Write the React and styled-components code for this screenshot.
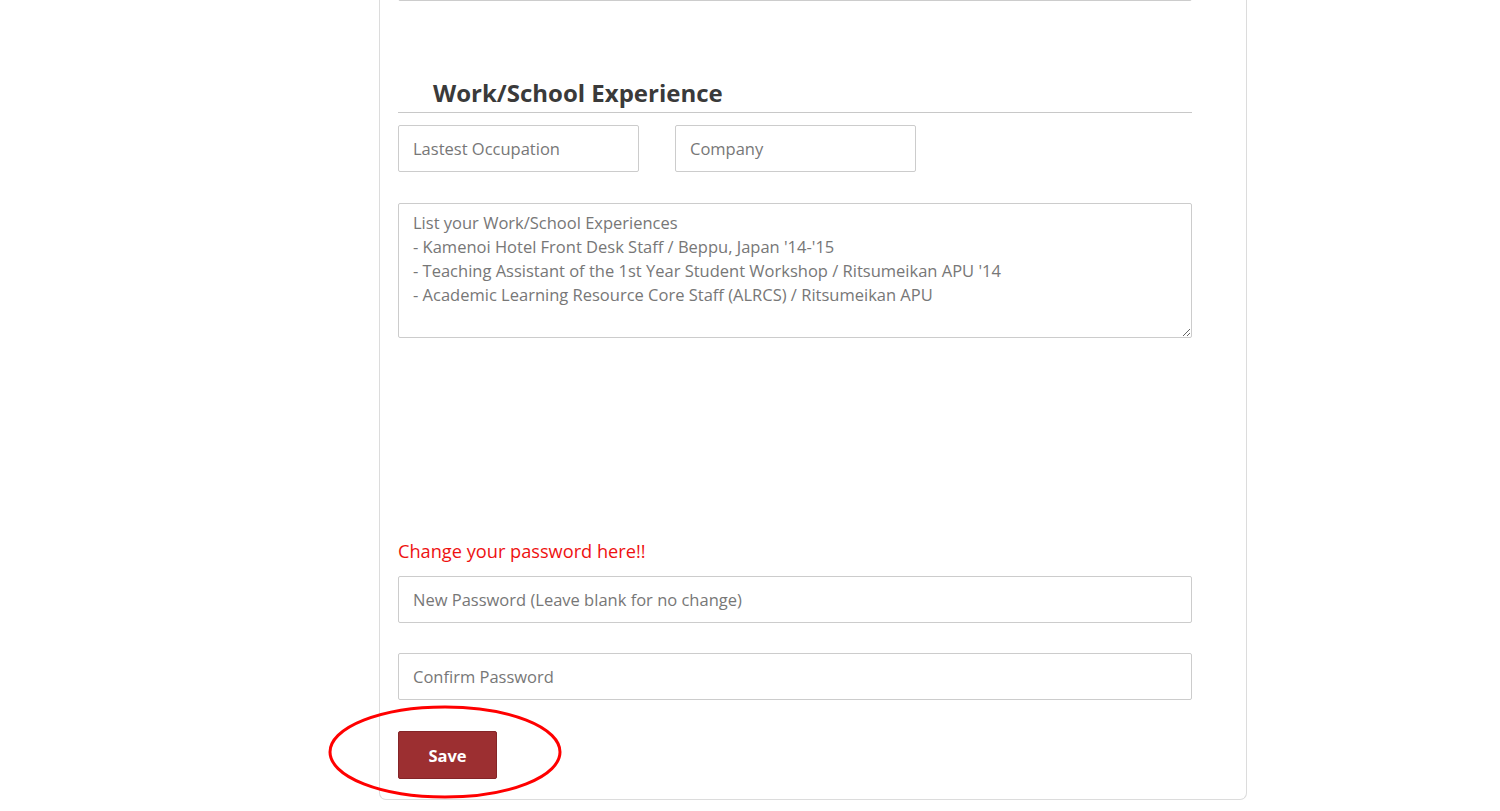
import React from "react";
import styled, { createGlobalStyle } from "styled-components";

const GlobalStyle = createGlobalStyle`
  html, body {
    margin: 0;
    padding: 0;
    background: #ffffff;
    overflow: hidden;
    font-family: "Open Sans", "Liberation Sans", sans-serif;
  }
`;

const Page = styled.div`
  width: 1500px;
  height: 811px;
  display: flex;
  justify-content: flex-start;
  padding-left: 379px;
  box-sizing: border-box;
`;

const Card = styled.div`
  position: relative;
  width: 868px;
  height: 846px;
  margin-top: -46px;
  box-sizing: border-box;
  border: 1px solid #dcdcdc;
  border-top: none;
  border-radius: 0 0 7px 7px;
  padding: 0 54px 0 18px;
  display: flex;
  flex-direction: column;
`;

const Input = styled.input`
  box-sizing: border-box;
  width: ${(p) => p.$width || "100%"};
  height: ${(p) => p.$height || "47px"};
  border: 1px solid #cccccc;
  border-radius: 2px;
  padding: 0 14px;
  font-family: "Open Sans", "Liberation Sans", sans-serif;
  font-size: 16.5px;
  color: #555;
  margin-top: ${(p) => p.$top || "0"};
  outline: none;

  &::placeholder {
    color: #777;
  }
`;

const Heading = styled.h3`
  margin: 76px 0 0;
  padding: 0 0 3px 35px;
  font-size: 24px;
  font-weight: 700;
  line-height: 32px;
  color: #3a3a3a;
  border-bottom: 1px solid #c8c8c8;
`;

const Row = styled.div`
  display: flex;
  gap: 36px;
  margin-top: 12px;
`;

const TextArea = styled.textarea`
  box-sizing: border-box;
  width: 100%;
  height: 135px;
  margin-top: 31px;
  border: 1px solid #cccccc;
  border-radius: 2px;
  padding: 7px 14px;
  font-family: "Open Sans", "Liberation Sans", sans-serif;
  font-size: 16.5px;
  line-height: 24px;
  color: #666;
  outline: none;
  resize: vertical;

  &::placeholder {
    color: #777;
  }
`;

const Notice = styled.p`
  margin: 201px 0 0;
  font-size: 18.2px;
  line-height: 24px;
  color: #ee1111;
`;

const SaveButton = styled.button`
  box-sizing: border-box;
  width: 99px;
  height: 48px;
  margin-top: 31px;
  background: #9c2f31;
  border: 1px solid #842427;
  border-radius: 2px;
  color: #ffffff;
  font-family: "Open Sans", "Liberation Sans", sans-serif;
  font-size: 16.5px;
  font-weight: 700;
  cursor: pointer;
`;

const Annotation = styled.svg`
  position: absolute;
  left: -53px;
  top: 750px;
  width: 236px;
  height: 96px;
  pointer-events: none;
`;

const experiences = `List your Work/School Experiences
- Kamenoi Hotel Front Desk Staff / Beppu, Japan '14-'15
- Teaching Assistant of the 1st Year Student Workshop / Ritsumeikan APU '14
- Academic Learning Resource Core Staff (ALRCS) / Ritsumeikan APU`;

export default function App() {
  return (
    <>
      <GlobalStyle />
      <Page>
        <Card>
          <Input $height="47px" placeholder="" readOnly />
          <Heading>Work/School Experience</Heading>
          <Row>
            <Input $width="241px" placeholder="Lastest Occupation" />
            <Input $width="241px" placeholder="Company" />
          </Row>
          <TextArea placeholder={experiences} />
          <Notice>Change your password here!!</Notice>
          <Input $top="13px" $height="47px" placeholder="New Password (Leave blank for no change)" />
          <Input $top="30px" $height="47px" placeholder="Confirm Password" />
          <SaveButton>Save</SaveButton>
          <Annotation viewBox="0 0 236 96">
            <ellipse cx="118" cy="48" rx="115" ry="45" fill="none" stroke="#ff0000" strokeWidth="3" />
          </Annotation>
        </Card>
      </Page>
    </>
  );
}
